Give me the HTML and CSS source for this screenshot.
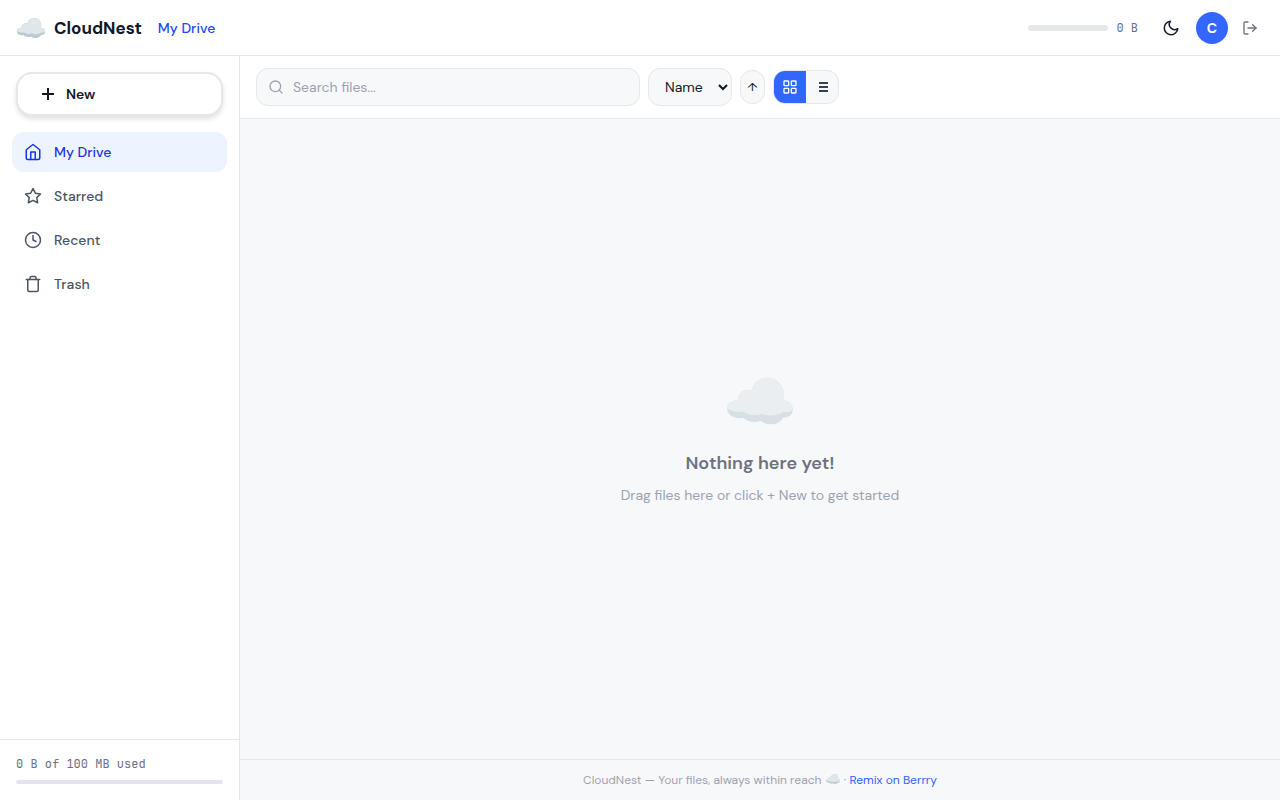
FILE: index.html
```
<!DOCTYPE html>
<html lang="en">
<head>
	<meta charset="UTF-8">
	<meta name="viewport" content="width=device-width, initial-scale=1.0">
	<title>CloudNest</title>
	<link rel="stylesheet" href="styles.css">
</head>
<body>
	<!-- shared cloud drawing -->
	<svg width="0" height="0" class="defs" aria-hidden="true">
		<symbol id="cloud" viewBox="0 0 200 141">
			<path fill="#b9cbd0" d="M0 92C0 78 14 70 33 68C33 46 50 34 75 38C79 16 98 0 122 0C150 0 172 22 172 49C173 57 172 63 170 69C188 69 199 79 199 94C201 110 190 120 170 121C163 134 150 141 132 141C118 141 108 137 103 130C85 138 62 134 50 122C24 126 0 115 0 92Z"/>
			<path fill="#e0e6ea" d="M0 92C0 78 14 70 33 68C33 46 50 34 75 38C79 16 98 0 122 0C150 0 172 22 172 49C173 57 172 63 170 69C188 69 199 79 199 94C195 103 184 106 171 103C153 116 125 118 107 108C88 117 66 114 52 103C28 104 8 101 0 92Z"/>
		</symbol>
	</svg>
	<div class="app">
		<header class="header">
			<div class="logo"><svg class="logo-cloud" aria-hidden="true"><use href="#cloud"/></svg>CloudNest</div>
			<nav class="breadcrumb"><a href="#">My Drive</a></nav>
			<div class="header-right">
				<div class="quota"><div class="quota-bar"></div><span class="quota-text">0 B</span></div>
				<button class="icon-btn" type="button" aria-label="Toggle theme">
					<svg class="icon" width="18" height="18" viewBox="0 0 24 24"><path d="M21 12.79A9 9 0 1 1 11.21 3 7 7 0 0 0 21 12.79z"/></svg>
				</button>
				<button class="avatar" type="button" aria-label="Account">C</button>
				<button class="icon-btn logout" type="button" aria-label="Log out">
					<svg class="icon" width="16" height="16" viewBox="0 0 24 24"><path d="M9 21H5a2 2 0 0 1-2-2V5a2 2 0 0 1 2-2h4"/><path d="M16 17l5-5-5-5"/><path d="M21 12H9"/></svg>
				</button>
			</div>
		</header>
		<aside class="sidebar">
			<div class="new-wrap">
				<button class="btn-new" type="button">
					<svg class="icon" width="16" height="16" viewBox="0 0 16 16"><path d="M8 2v12M2 8h12"/></svg>
					New
				</button>
			</div>
			<nav class="nav">
				<a href="#" class="nav-item active">
					<svg class="icon" width="18" height="18" viewBox="0 0 24 24"><path d="M3 9l9-7 9 7v11a2 2 0 0 1-2 2H5a2 2 0 0 1-2-2z"/><path d="M9 22V12h6v10"/></svg>
					My Drive
				</a>
				<a href="#" class="nav-item">
					<svg class="icon" width="18" height="18" viewBox="0 0 24 24"><path d="M12 2l3.09 6.26L22 9.27l-5 4.87 1.18 6.88L12 17.77l-6.18 3.25L7 14.14 2 9.27l6.91-1.01z"/></svg>
					Starred
				</a>
				<a href="#" class="nav-item">
					<svg class="icon" width="18" height="18" viewBox="0 0 24 24"><circle cx="12" cy="12" r="10"/><path d="M12 6v6l4 2"/></svg>
					Recent
				</a>
				<a href="#" class="nav-item">
					<svg class="icon" width="18" height="18" viewBox="0 0 24 24"><path d="M3 6h18"/><path d="M19 6v14a2 2 0 0 1-2 2H7a2 2 0 0 1-2-2V6m3 0V4a2 2 0 0 1 2-2h4a2 2 0 0 1 2 2v2"/></svg>
					Trash
				</a>
			</nav>
			<div class="storage">
				<div class="storage-text">0 B of 100 MB used</div>
				<div class="storage-bar"></div>
			</div>
		</aside>
		<main class="main">
			<div class="toolbar">
				<label class="search">
					<svg class="icon" width="16" height="16" viewBox="0 0 24 24"><circle cx="11" cy="11" r="8"/><path d="M21 21l-4.35-4.35"/></svg>
					<input type="text" placeholder="Search files..." aria-label="Search files">
				</label>
				<select class="sort" aria-label="Sort by">
					<option>Name</option>
					<option>Date</option>
					<option>Size</option>
				</select>
				<button class="sort-dir" type="button" aria-label="Sort ascending">↑</button>
				<div class="view-toggle">
					<button class="view-btn active" type="button" aria-label="Grid view">
						<svg class="icon" width="16" height="16" viewBox="0 0 24 24"><rect x="3" y="3" width="7" height="7" rx="1"/><rect x="14" y="3" width="7" height="7" rx="1"/><rect x="3" y="14" width="7" height="7" rx="1"/><rect x="14" y="14" width="7" height="7" rx="1"/></svg>
					</button>
					<button class="view-btn" type="button" aria-label="List view">
						<svg width="16" height="16" viewBox="0 0 16 16" fill="currentColor"><path d="M5 3h9v2H5zM5 7h9v2H5zM5 11h9v2H5z"/></svg>
					</button>
				</div>
			</div>
			<section class="empty">
				<svg class="empty-cloud" aria-hidden="true"><use href="#cloud"/></svg>
				<h2 class="empty-title">Nothing here yet!</h2>
				<p class="empty-text">Drag files here or click + New to get started</p>
			</section>
			<footer class="footer">CloudNest — Your files, always within reach <svg class="footer-cloud" aria-hidden="true"><use href="#cloud"/></svg> · <a href="#">Remix on Berrry</a></footer>
		</main>
	</div>
</body>
</html>
```
FILE: styles.css
```
*{ box-sizing: border-box; }
body{
	margin: 0; background-color: #f7f8fa; color: #111827;
	font-family: "DM Sans", Inter, sans-serif; font-size: 14px; line-height: 20px;
}
button, input, select{ font: inherit; color: inherit; margin: 0; }
button{ padding: 0; border: 0; background: none; cursor: pointer; }
a{ text-decoration: none; color: #2f62ff; }
.defs{ position: absolute; }
.icon{
	fill: none; stroke: currentColor; stroke-width: 2;
	stroke-linecap: round; stroke-linejoin: round; flex-shrink: 0;
}
.app{
	display: grid; grid-template-columns: 240px 1fr; grid-template-rows: 56px 1fr;
	min-height: 100vh;
}

/* header */
.header{
	grid-column: 1 / 3; display: flex; align-items: center; gap: 16px;
	padding: 0 16px; background-color: #fff; border-bottom: 1px solid #e5e7eb;
}
.logo{
	display: flex; align-items: center; gap: 8px; font-size: 17px; font-weight: 700;
}
.logo-cloud{ width: 30px; height: 20px; }
.breadcrumb a{ color: #2149f5; font-weight: 500; }
.header-right{ display: flex; align-items: center; gap: 8px; margin-left: auto; }
.quota{ display: flex; align-items: center; gap: 8px; margin-right: 8px; }
.quota-bar{ width: 80px; height: 6px; border-radius: 3px; background-color: #e5e7eb; }
.quota-text, .storage-text{
	font-family: "JetBrains Mono", "Liberation Mono", monospace; font-size: 12px; color: #6b7280;
}
.icon-btn{
	display: flex; align-items: center; justify-content: center; width: 34px; height: 34px;
}
.logout{ width: 28px; color: #6b7280; }
.avatar{
	width: 32px; height: 32px; border-radius: 50%; background-color: #3366ff;
	color: #fff; font-weight: 700;
}

/* sidebar */
.sidebar{
	display: flex; flex-direction: column; background-color: #fff;
	border-right: 1px solid #e5e7eb;
}
.new-wrap{ padding: 16px; }
.btn-new{
	display: flex; align-items: center; gap: 10px; width: 100%; height: 44px;
	padding: 0 22px; border: 2px solid #e5e7eb; border-radius: 16px;
	background-color: #fff; font-weight: 600;
	box-shadow: 0 3px 5px rgba(0, 0, 0, .12);
}
.btn-new .icon{ stroke-linecap: butt; }
.nav{ display: flex; flex-direction: column; gap: 4px; padding: 0 12px; }
.nav-item{
	display: flex; align-items: center; gap: 12px; height: 40px; padding: 0 12px;
	border-radius: 12px; color: #4b5563; font-weight: 500;
}
.nav-item.active{ background-color: #edf3ff; color: #1a36e0; }
.storage{
	margin-top: auto; padding: 14px 16px 16px; border-top: 1px solid #e5e7eb;
}
.storage-bar{
	height: 4px; margin-top: 6px; border-radius: 2px; background-color: #e2e5eb;
}

/* main area */
.main{ display: flex; flex-direction: column; min-width: 0; }
.toolbar{
	display: flex; align-items: center; gap: 8px; padding: 12px 16px;
	background-color: #fff; border-bottom: 1px solid #e5e7eb;
}
.search{
	display: flex; align-items: center; gap: 9px; flex: 0 1 384px; height: 38px;
	padding: 0 11px; border: 1px solid #e5e7eb; border-radius: 12px;
	background-color: #f7f8fa; color: #9ca3af;
}
.search input{
	flex: 1; min-width: 0; padding: 0; border: 0; outline: 0; background: none; color: #111827;
}
.search input::placeholder{ color: #9ca3af; }
.sort{
	width: 84px; height: 38px; padding: 0 0 0 12px; border: 1px solid #e5e7eb;
	border-radius: 12px; background-color: #f7f8fa;
}
.sort-dir{
	width: 25px; height: 34px; border: 1px solid #e5e7eb; border-radius: 12px;
	background-color: #f7f8fa; font-size: 12px; text-align: center;
}
.view-toggle{
	display: flex; overflow: hidden; border: 1px solid #e5e7eb; border-radius: 12px;
	background-color: #f7f8fa;
}
.view-btn{
	display: flex; align-items: center; justify-content: center; width: 32px; height: 32px;
	color: #374151;
}
.view-btn.active{ background-color: #3366ff; color: #fff; }
.empty{
	flex: 1; display: flex; flex-direction: column; align-items: center;
	justify-content: center; padding-top: 4px; text-align: center;
}
.empty-cloud{ width: 66px; height: 48px; margin-bottom: 24px; opacity: .5; }
.empty-title{
	margin: 0 0 8px; font-size: 18px; line-height: 28px; font-weight: 600; color: #6b7280;
}
.empty-text{ margin: 0; color: #9ca3af; }
.footer{
	padding: 10px 16px; border-top: 1px solid #e5e7eb; text-align: center;
	font-size: 12px; color: #9ca3af;
}
.footer-cloud{ width: 16px; height: 10px; }
```
